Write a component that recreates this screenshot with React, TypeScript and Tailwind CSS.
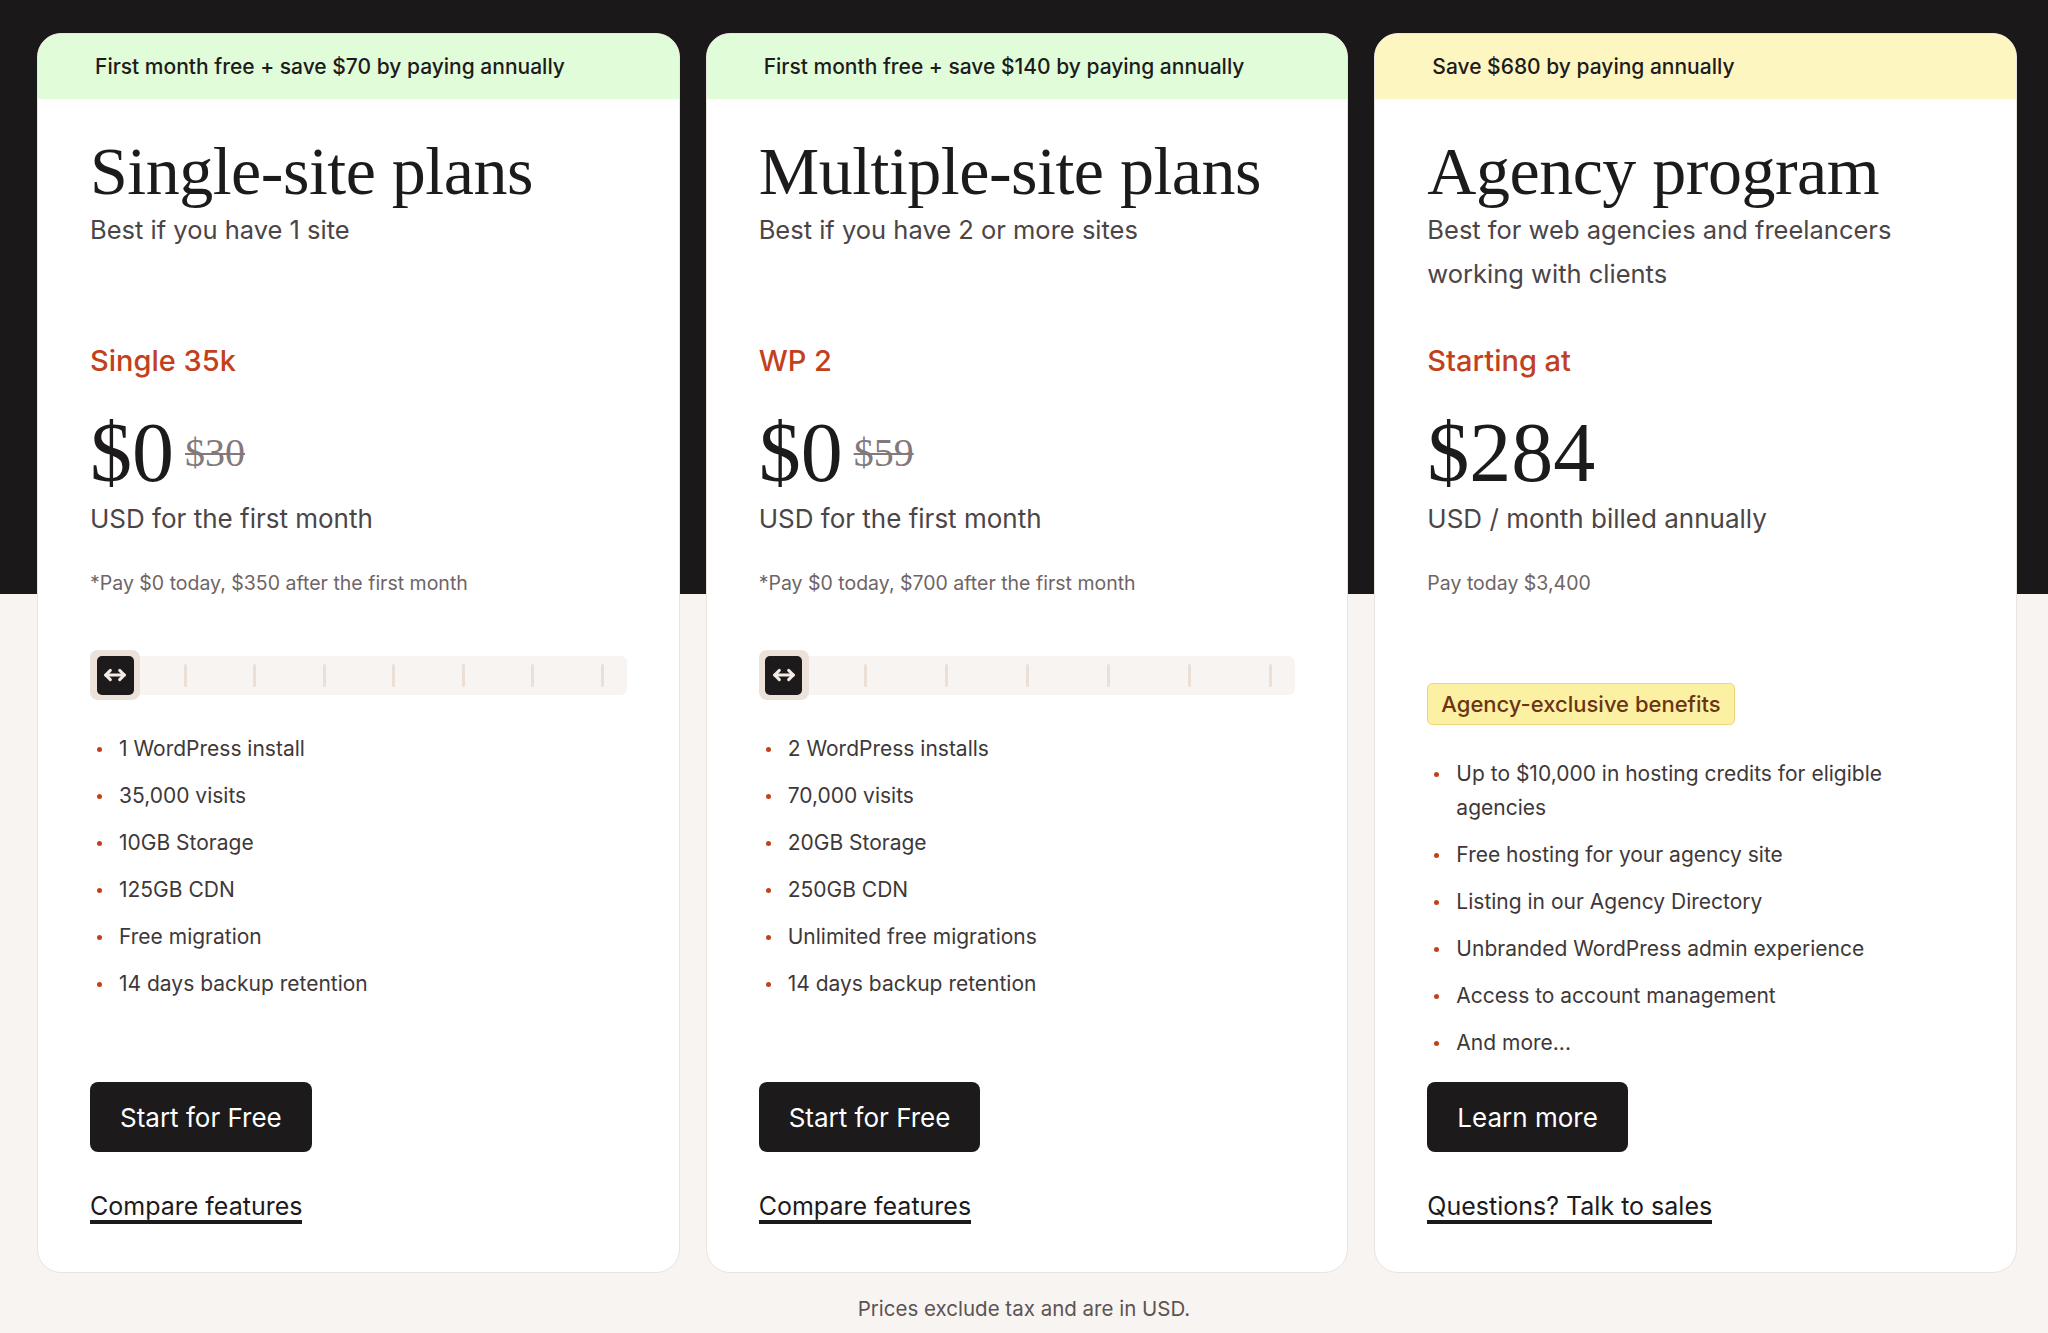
import React from "react";

type Plan = {
  banner: string;
  bannerBg: string;
  title: string;
  subtitle: string;
  tier: string;
  price: string;
  oldPrice?: string;
  unit: string;
  note: string;
  ticks?: number;
  badge?: string;
  features: string[];
  cta: string;
  link: string;
};

const plans: Plan[] = [
  {
    banner: "First month free + save $70 by paying annually",
    bannerBg: "bg-[#e1fcd8]",
    title: "Single-site plans",
    subtitle: "Best if you have 1 site",
    tier: "Single 35k",
    price: "$0",
    oldPrice: "$30",
    unit: "USD for the first month",
    note: "*Pay $0 today, $350 after the first month",
    ticks: 7,
    features: [
      "1 WordPress install",
      "35,000 visits",
      "10GB Storage",
      "125GB CDN",
      "Free migration",
      "14 days backup retention",
    ],
    cta: "Start for Free",
    link: "Compare features",
  },
  {
    banner: "First month free + save $140 by paying annually",
    bannerBg: "bg-[#e1fcd8]",
    title: "Multiple-site plans",
    subtitle: "Best if you have 2 or more sites",
    tier: "WP 2",
    price: "$0",
    oldPrice: "$59",
    unit: "USD for the first month",
    note: "*Pay $0 today, $700 after the first month",
    ticks: 6,
    features: [
      "2 WordPress installs",
      "70,000 visits",
      "20GB Storage",
      "250GB CDN",
      "Unlimited free migrations",
      "14 days backup retention",
    ],
    cta: "Start for Free",
    link: "Compare features",
  },
  {
    banner: "Save $680 by paying annually",
    bannerBg: "bg-[#fdf6c1]",
    title: "Agency program",
    subtitle: "Best for web agencies and freelancers working with clients",
    tier: "Starting at",
    price: "$284",
    unit: "USD / month billed annually",
    note: "Pay today $3,400",
    badge: "Agency-exclusive benefits",
    features: [
      "Up to $10,000 in hosting credits for eligible agencies",
      "Free hosting for your agency site",
      "Listing in our Agency Directory",
      "Unbranded WordPress admin experience",
      "Access to account management",
      "And more...",
    ],
    cta: "Learn more",
    link: "Questions? Talk to sales",
  },
];

function Slider({ ticks }: { ticks: number }) {
  const slots = Array.from({ length: ticks + 1 });
  return (
    <div className="relative mt-[53px] flex h-[50px] items-center">
      <div className="flex h-[39px] w-full items-center justify-between rounded-[6px] bg-[#f8f4f1] pl-[24px] pr-[23px]">
        {slots.map((_, i) => (
          <span
            key={i}
            className={`h-[23px] w-[3px] rounded-full ${i === 0 ? "bg-transparent" : "bg-[#ebdfd6]"}`}
          />
        ))}
      </div>
      {/* thumb */}
      <div className="absolute left-0 top-0 flex h-[50px] w-[50px] items-center justify-center rounded-[8px] bg-[#ece2da]">
        <div className="flex h-[39px] w-[37px] items-center justify-center rounded-[5px] bg-[#1c1a1b]">
          <svg width="28" height="28" viewBox="0 0 24 24" fill="none" stroke="#f3ece6" strokeWidth={2.6} strokeLinecap="round" strokeLinejoin="round">
            <path d="M4 12h16" />
            <path d="M8 8l-4 4 4 4" />
            <path d="M16 8l4 4-4 4" />
          </svg>
        </div>
      </div>
    </div>
  );
}

function Card({ plan }: { plan: Plan }) {
  return (
    <div className="flex h-[1240px] flex-1 flex-col overflow-hidden rounded-[24px] border border-[#ebe3dd] bg-white">
      <div className={`flex h-[65px] shrink-0 items-center px-[57px] ${plan.bannerBg}`}>
        <span className="text-[21px] font-medium text-[#1d1b1b]">{plan.banner}</span>
      </div>

      <div className="flex flex-1 flex-col px-[52px] pb-[48px] pt-[36px]">
        <h2 className="font-['Liberation_Serif',serif] text-[68px] leading-[73px] tracking-[-0.5px] text-[#1d1a1b]">
          {plan.title}
        </h2>
        <p className="min-h-[88px] max-w-[500px] text-[25.5px] leading-[44px] text-[#4b4546]">{plan.subtitle}</p>

        <div className="mt-[45px] text-[29px] font-medium leading-[40px] text-[#c2411c]">{plan.tier}</div>

        <div className="mt-[30px] flex items-center gap-[11px]">
          <span className="font-['Liberation_Serif',serif] text-[84px] leading-none text-[#1d1a1b]">{plan.price}</span>
          {plan.oldPrice && (
            <span className="font-['Liberation_Serif',serif] text-[40px] leading-none text-[#84797a] line-through decoration-[2px]">
              {plan.oldPrice}
            </span>
          )}
        </div>

        <div className="mt-[2px] text-[26px] leading-[44px] text-[#4b4546]">{plan.unit}</div>
        <div className="mt-[28px] text-[19.5px] leading-[28px] text-[#6f6466]">{plan.note}</div>

        {plan.ticks && <Slider ticks={plan.ticks} />}
        {plan.badge && (
          <div className="mt-[86px] flex">
            <span className="flex h-[42px] items-center rounded-[5px] border border-[#eed57a] bg-[#fcf0a3] px-[13px] text-[22px] font-medium text-[#6b3514]">
              {plan.badge}
            </span>
          </div>
        )}

        <ul className="mt-[32px] flex max-w-[510px] flex-col gap-[13px]">
          {plan.features.map((f) => (
            <li key={f} className="flex items-start pl-[7px] text-[21px] leading-[34px] text-[#3e3839]">
              <span className="mr-[17px] mt-[15px] h-[5px] w-[5px] shrink-0 rounded-full bg-[#c2411c]" />
              <span>{f}</span>
            </li>
          ))}
        </ul>

        <div className="mt-auto flex flex-col items-start">
          <button className="flex h-[70px] items-center rounded-[8px] bg-[#1c1a1b] px-[30px] text-[26px] text-white">
            {plan.cta}
          </button>
          <a className="mt-[41px] inline-block border-b-[4px] border-[#1c1a1b] text-[25px] leading-[27px] text-[#1d1a1b]">
            {plan.link}
          </a>
        </div>
      </div>
    </div>
  );
}

export default function App() {
  return (
    <div className="min-h-[1333px] w-full bg-[linear-gradient(to_bottom,#1b1819_0px,#1b1819_594px,#f8f4f1_594px)] font-['Inter',sans-serif]">
      <div className="flex gap-[26px] pl-[37px] pr-[31px] pt-[33px]">
        {plans.map((p) => (
          <Card key={p.title} plan={p} />
        ))}
      </div>
      <p className="mt-[22px] text-center text-[20.5px] leading-[28px] text-[#5b5354]">
        Prices exclude tax and are in USD.
      </p>
    </div>
  );
}
